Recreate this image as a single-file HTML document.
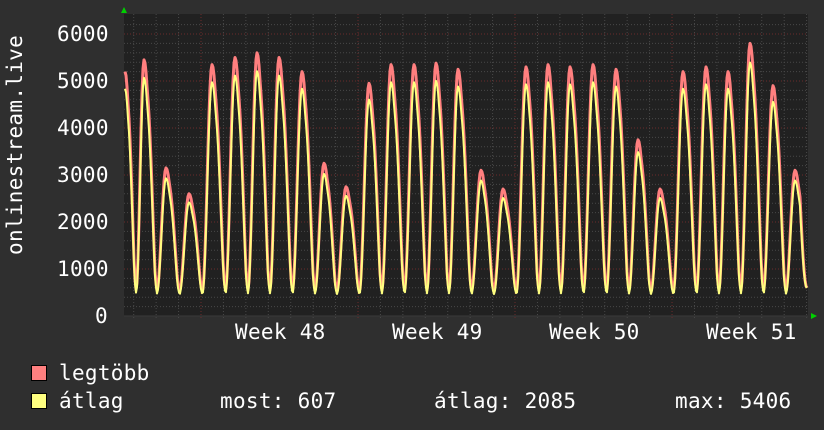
<!DOCTYPE html>
<html><head><meta charset="utf-8"><style>
html,body{margin:0;padding:0;background:#2f2f2f;}
body{width:824px;height:430px;overflow:hidden;position:relative;font-family:"DejaVu Sans Mono","Liberation Mono",monospace;color:#fff;}
.t{position:absolute;font-size:21px;line-height:20px;white-space:pre;letter-spacing:0.3px;}
.box{position:absolute;width:14px;height:14px;border:1px solid #000;}
</style></head><body>
<svg width="824" height="430" style="position:absolute;left:0;top:0">
<rect x="124" y="14" width="684" height="302" fill="#212121"/>
<g id="grid"></g>
<g id="data"></g>
<polygon points="121,13 127,13 124,7" fill="#00d000"/>
<polygon points="811,313 811,319 817,316" fill="#00d000"/>
</svg>
<div class="t" style="left:57px;top:24px">6000</div>
<div class="t" style="left:57px;top:71px">5000</div>
<div class="t" style="left:57px;top:118px">4000</div>
<div class="t" style="left:57px;top:165px">3000</div>
<div class="t" style="left:57px;top:212px">2000</div>
<div class="t" style="left:57px;top:259px">1000</div>
<div class="t" style="left:95px;top:306px">0</div>
<div class="t" style="left:-75px;top:155px;width:180px;text-align:center;transform:rotate(-90deg);">onlinestream.live</div>
<div class="t" style="left:235px;top:322px">Week 48</div>
<div class="t" style="left:392px;top:322px">Week 49</div>
<div class="t" style="left:549px;top:322px">Week 50</div>
<div class="t" style="left:706px;top:322px">Week 51</div>
<div class="box" style="left:31px;top:365px;background:#ff8080"></div>
<div class="box" style="left:31px;top:393px;background:#ffff80"></div>
<div class="t" style="left:59px;top:363px">legtöbb</div>
<div class="t" style="left:59px;top:391px">átlag</div>
<div class="t" style="left:220px;top:391px">most: 607</div>
<div class="t" style="left:434px;top:391px">átlag: 2085</div>
<div class="t" style="left:675px;top:391px">max: 5406</div>
<script>
var NS="http://www.w3.org/2000/svg";
function el(p,n,a){var e=document.createElementNS(NS,n);for(var k in a)e.setAttribute(k,a[k]);p.appendChild(e);return e;}
var g=document.getElementById("grid");
for(var v=200;v<=6200;v+=200){var y=316-v*0.047;var maj=v%1000==0;
el(g,"line",{x1:124,x2:808,y1:y,y2:y,stroke:maj?"#6a2c2c":"#484848","stroke-dasharray":"1,2","stroke-width":1});}
for(var x=201-5*22.43;x<808;x+=22.43){if(x<125)continue;var maj=Math.abs(((x-201)/157)-Math.round((x-201)/157))<0.01;
el(g,"line",{x1:x,x2:x,y1:14,y2:318,stroke:maj?"#6a2c2c":"#484848","stroke-dasharray":"1,2","stroke-width":1});}
el(g,"line",{x1:124,x2:808,y1:316,y2:316,stroke:"#3a3a3a"});
var peaks=[[125,5200],[144,5450],[166,3150],[189,2600],[212,5350],[235,5500],[257,5600],[279,5500],[302,5200],[324,3250],[346,2750],[369,4950],[391,5350],[414,5350],[436,5380],[458,5250],[481,3100],[503,2700],[526,5300],[548,5350],[570,5300],[593,5350],[616,5250],[638,3750],[660,2700],[683,5200],[706,5300],[728,5200],[750,5800],[773,4900],[795,3100],[818,3000]];
function rc(t,w){return t<w?0.5+0.5*Math.cos(Math.PI*t/w):0;}
function val(x,avg){for(var i=0;i<peaks.length-1;i++){var a=peaks[i],b=peaks[i+1];if(x>=a[0]&&x<=b[0]){
var t=(x-a[0])/(b[0]-a[0]);var base=avg?450:520;
var pa=avg?a[1]*0.93:a[1],pb=avg?b[1]*0.93:b[1];
var fa=rc(t,0.62);var fb=rc(1-t,0.42);
var sh=(t>0.15&&t<0.5)?Math.sin((t-0.15)/0.35*Math.PI)*0.08*pa:0;
return base+(pa-base)*fa+(pb-base)*fb+sh;}}return 600;}
var d=document.getElementById("data");
[[false,"#ff7f7f",3],[true,"#ffff80",2]].forEach(function(s){var p="";
for(var x=125;x<=807;x+=1){var v=val(x,s[0]);if(x>800)v=v+(600-v)*(x-800)/7;p+=(x==125?"M":"L")+x+","+(316-v*0.047).toFixed(1);}
el(d,"path",{d:p,fill:"none",stroke:s[1],"stroke-width":s[2],"stroke-linejoin":"round"});});
</script>
</body></html>
